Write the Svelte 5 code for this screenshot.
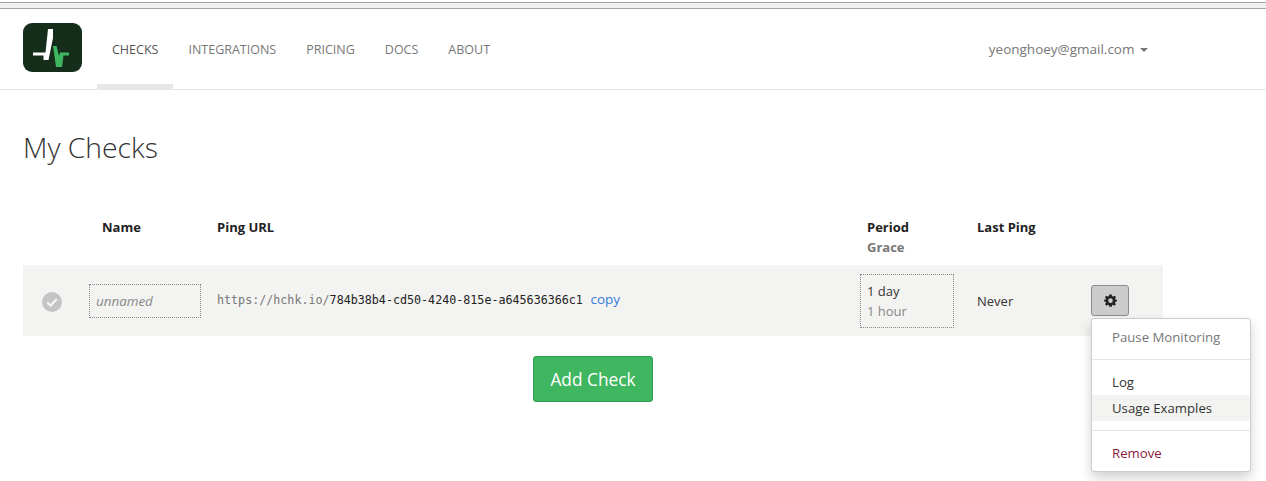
<script>
  let navItems = ["CHECKS", "INTEGRATIONS", "PRICING", "DOCS", "ABOUT"];
  let active = "CHECKS";
</script>

<div class="chrome"></div>

<nav class="navbar">
  <div class="logo">
    <svg width="59" height="49" viewBox="0 0 59 49">
      <path fill="#fff" d="M10 29.5 H22.5 L25 6 H30 V15 L25.5 37 H20.5 V32.5 H10 Z" />
      <path fill="#3fb660" d="M30 23 H33.5 L36 33 L37 29.5 H46 V32.5 H40.5 L39 44 H33 Z" />
    </svg>
  </div>
  <ul class="nav">
    {#each navItems as item}
      <li class:active={item == active}>{item}</li>
    {/each}
  </ul>
  <div class="user">yeonghoey@gmail.com <span class="caret"></span></div>
</nav>

<main class="page">
  <h1>My Checks</h1>

  <div class="checks">
    <div class="row head">
      <div></div>
      <div class="cell-name">Name</div>
      <div class="cell-url">Ping URL</div>
      <div class="cell-period">Period<br /><span class="grace-head">Grace</span></div>
      <div class="cell-last">Last Ping</div>
      <div></div>
    </div>

    <div class="row check">
      <div class="status">
        <svg width="20" height="20" viewBox="0 0 20 20">
          <circle cx="10" cy="10" r="10" fill="#c4c4c4" />
          <path d="M5.2 10.4 L8.6 13.6 L14.8 7" fill="none" stroke="#f3f3f1" stroke-width="2.2" />
        </svg>
      </div>
      <div class="name-box">unnamed</div>
      <div class="url">
        <code><span class="base">https://hchk.io/</span>784b38b4-cd50-4240-815e-a645636366c1</code>
        <span class="copy">copy</span>
      </div>
      <div class="timeout">
        <div>1 day</div>
        <div class="grace">1 hour</div>
      </div>
      <div class="never">Never</div>
      <div class="actions">
        <button class="gear" aria-label="Settings">
          <svg width="13" height="13" viewBox="0 0 14 14">
            <path
              fill="#222"
              fill-rule="evenodd"
              d="M5.7 0.5 H8.3 L8.7 2.3 L9.9 2.8 L11.5 1.8 L13 3.6 L11.8 5 L12.2 6 L13.9 6.3 V8 L12.2 8.4 L11.8 9.5 L12.9 11 L11.2 12.7 L9.8 11.7 L8.7 12.1 L8.3 13.8 H5.7 L5.3 12.1 L4.2 11.7 L2.8 12.7 L1.1 11 L2.2 9.5 L1.8 8.4 L0.1 8 V6.3 L1.8 6 L2.2 5 L1 3.6 L2.5 1.8 L4.1 2.8 L5.3 2.3 Z M7 4.7 A2.45 2.45 0 1 0 7 9.6 A2.45 2.45 0 1 0 7 4.7 Z"
            />
          </svg>
        </button>
        <div class="menu">
          <div class="item muted">Pause Monitoring</div>
          <div class="divider"></div>
          <div class="item">Log</div>
          <div class="item hover">Usage Examples</div>
          <div class="divider"></div>
          <div class="item danger">Remove</div>
        </div>
      </div>
    </div>
  </div>

  <div class="add">
    <button class="add-btn">Add Check</button>
  </div>
</main>

<style>
  :global(body) {
    font-family: "Open Sans", sans-serif;
    font-size: 13.5px;
    color: #333;
    background: #fff;
  }

  .chrome {
    margin-top: 2px;
    height: 7px;
    border-top: 1px solid #a6a6a6;
    border-bottom: 1px solid #a6a6a6;
    background: #f1f1f1;
    box-sizing: border-box;
  }

  .navbar {
    display: flex;
    align-items: stretch;
    height: 81px;
    border-bottom: 1px solid #e7e7e7;
    box-sizing: border-box;
    padding-left: 23px;
  }

  .logo {
    width: 59px;
    height: 49px;
    margin-top: 14px;
    border-radius: 9px;
    background: #152e1c;
    overflow: hidden;
  }

  .nav {
    display: flex;
    list-style: none;
    margin: 0 0 0 15px;
    padding: 0;
  }

  .nav li {
    padding: 0 15px;
    line-height: 82px;
    font-size: 12.5px;
    color: #777;
    height: 80px;
    box-sizing: border-box;
  }

  .nav li.active {
    color: #555;
    border-bottom: 5px solid #e7e7e7;
  }

  .user {
    margin-left: auto;
    margin-right: 118px;
    line-height: 80px;
    font-size: 13.5px;
    color: #777;
  }

  .caret {
    display: inline-block;
    margin-left: 2px;
    vertical-align: middle;
    border-top: 4px solid #777;
    border-left: 4px solid transparent;
    border-right: 4px solid transparent;
  }

  .page {
    min-height: 391px;
    padding: 0 103px 0 23px;
    overflow: hidden;
  }

  h1 {
    margin: 38px 0 0;
    font-size: 28.3px;
    line-height: 38px;
    font-weight: 300;
    color: #333;
  }

  .checks {
    margin-top: 34px;
  }

  .row {
    display: grid;
    grid-template-columns: 66px 115px 656px 117px 114px 72px;
  }

  .head {
    height: 65px;
    padding-top: 17px;
    box-sizing: border-box;
    font-weight: 700;
    font-size: 13px;
    line-height: 20px;
    color: #222;
  }

  .cell-name {
    padding-left: 13px;
  }

  .cell-url {
    padding-left: 13px;
  }

  .cell-period {
    padding-left: 7px;
  }

  .grace-head {
    color: #777;
  }

  .check {
    background: #f3f3f1;
    height: 71px;
    align-items: center;
  }

  .status {
    padding-left: 19px;
    padding-top: 2px;
    display: flex;
  }

  .name-box {
    box-sizing: border-box;
    width: 112px;
    height: 34px;
    border: 1px dotted #888;
    line-height: 32px;
    padding-left: 6px;
    font-style: italic;
    font-size: 13.4px;
    color: #888;
  }

  .url {
    padding-left: 13px;
    margin-top: -4px;
    white-space: nowrap;
  }

  code {
    font-family: "DejaVu Sans Mono", monospace;
    font-size: 11.7px;
    color: #222;
  }

  .base {
    color: #777;
  }

  .copy {
    color: #337ee0;
    font-size: 13.5px;
    margin-left: 4px;
  }

  .timeout {
    box-sizing: border-box;
    width: 94px;
    height: 54px;
    padding: 6px 0 0 6px;
    border: 1px dotted #888;
    font-size: 13px;
    line-height: 20px;
    color: #333;
  }

  .grace {
    color: #888;
  }

  .never {
    font-size: 13px;
  }

  .actions {
    position: relative;
    height: 100%;
  }

  .gear {
    display: flex;
    align-items: center;
    justify-content: center;
    width: 38px;
    height: 31px;
    margin-top: 20px;
    padding: 0;
    border: 1px solid #8c8c8c;
    border-radius: 3px;
    background: #ccc;
  }

  .menu {
    position: absolute;
    top: 53px;
    left: 0;
    width: 160px;
    box-sizing: border-box;
    padding: 5px 0;
    background: #fff;
    border: 1px solid #ccc;
    border-radius: 3px;
    box-shadow: 0 6px 12px rgba(0, 0, 0, 0.18);
    font-size: 13.2px;
    z-index: 10;
  }

  .item {
    padding: 0 20px;
    line-height: 26px;
    color: #333;
  }

  .item.muted {
    color: #777;
  }

  .item.hover {
    background: #f3f3f1;
  }

  .item.danger {
    color: #8a1a3c;
  }

  .divider {
    height: 1px;
    margin: 9px 0;
    background: #e5e5e5;
  }

  .add {
    display: flex;
    justify-content: center;
    margin-top: 20px;
  }

  .add-btn {
    width: 120px;
    height: 46px;
    border: 1px solid #2f9c4f;
    border-radius: 3px;
    background: #3fb660;
    color: #fff;
    font-family: inherit;
    font-size: 17.3px;
  }
</style>
